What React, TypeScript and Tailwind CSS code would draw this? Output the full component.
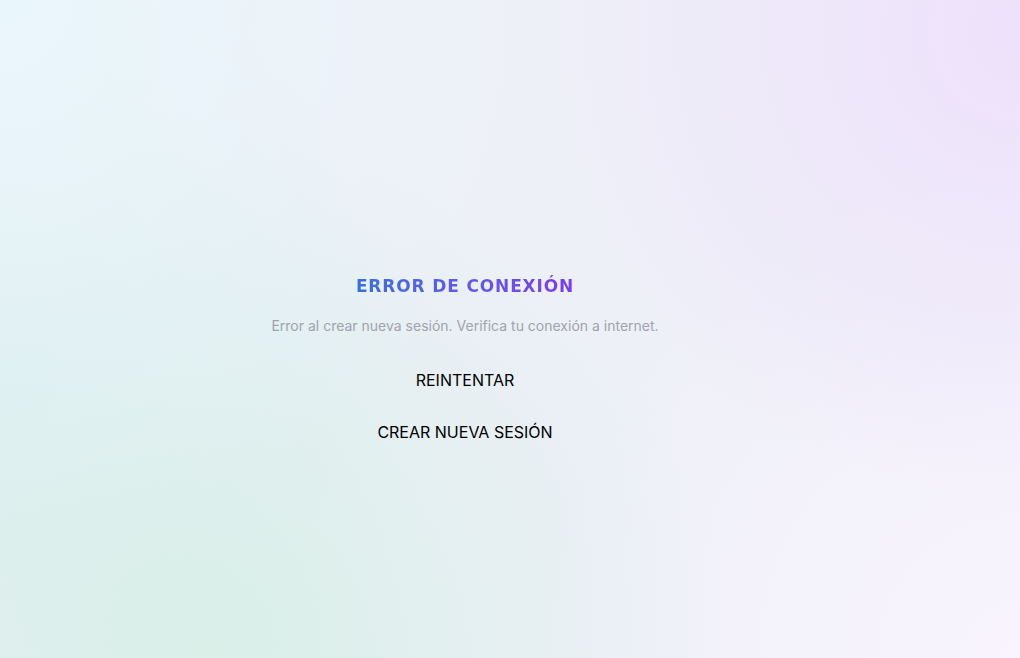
export default function App() {
  return (
    <div className="relative h-[658px] w-full overflow-hidden bg-[#eef0f8] font-['Inter',sans-serif]">
      {/* fondo degradado */}
      <div className="absolute inset-0 bg-[radial-gradient(circle_at_0%_0%,#e9f6fb_0%,transparent_45%),radial-gradient(circle_at_100%_5%,#eee1fb_0%,transparent_40%),radial-gradient(circle_at_20%_100%,#d9efe8_0%,transparent_50%),radial-gradient(circle_at_100%_100%,#f9f4fe_0%,transparent_40%),radial-gradient(circle_at_0%_60%,#dcedf0_0%,transparent_40%)]" />

      <div className="relative flex h-full items-center justify-center pr-[90px] pt-[72px]">
        <div className="flex flex-col items-center">
          <h1 className="bg-gradient-to-r from-[#386ee0] to-[#7b3bef] bg-clip-text font-['DejaVu_Sans',sans-serif] text-[17px] font-bold leading-6 tracking-[0.05em] text-transparent">
            ERROR DE CONEXIÓN
          </h1>
          <p className="mt-[18px] text-sm text-[#a0a3ad]">
            Error al crear nueva sesión. Verifica tu conexión a internet.
          </p>
          <div className="mt-5 flex flex-col items-center gap-1">
            <button className="px-4 py-3 text-base text-black">REINTENTAR</button>
            <button className="px-4 py-3 text-base text-black">CREAR NUEVA SESIÓN</button>
          </div>
        </div>
      </div>
    </div>
  )
}
